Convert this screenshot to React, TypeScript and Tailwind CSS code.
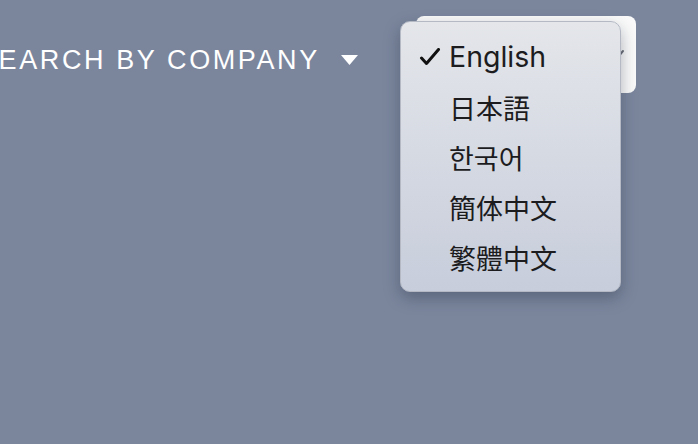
import React from "react";

const items = [
  { label: "English", font: "'Inter', 'Liberation Sans', sans-serif", checked: true, size: "text-[28.5px]" },
  { label: "日本語", font: "'Noto Sans CJK JP', sans-serif", size: "text-[27px]" },
  { label: "한국어", font: "'Noto Sans CJK KR', sans-serif", size: "text-[27px]" },
  { label: "簡体中文", font: "'Noto Sans CJK SC', sans-serif", size: "text-[27px]" },
  { label: "繁體中文", font: "'Noto Sans CJK TC', sans-serif", size: "text-[27px]" },
];

export default function App() {
  return (
    <div className="relative w-[698px] h-[444px] overflow-hidden bg-[#7b869d]">
      <div className="flex items-start ml-[-22px] pt-[16px]">
        <div className="flex items-center h-[77px] pt-[11px]">
          <span className="text-white text-[27px] tracking-[2.6px] font-['Liberation_Sans',sans-serif] leading-none">
            SEARCH BY COMPANY
          </span>
          <svg width="17" height="10" viewBox="0 0 17 10" className="ml-[21px]">
            <path d="M0 0 H17 L8.5 10 Z" fill="#ffffff" />
          </svg>
        </div>
        <div className="ml-[58px] relative w-[220px] h-[77px] rounded-[8px] bg-[#fafafa]">
          <svg width="14" height="14" viewBox="0 0 14 14" className="absolute right-[6px] top-[32px]">
            <path d="M2 9 L7 3" stroke="#6b6f78" strokeWidth="2" fill="none" strokeLinecap="round" />
          </svg>
        </div>
      </div>

      <div className="absolute left-[400px] top-[21px] w-[221px] h-[271px] rounded-[10px] border border-[#b4b9c4] bg-gradient-to-b from-[#e4e6ea] to-[#c7cddb] shadow-[0_6px_16px_rgba(30,40,60,0.35)] py-[10px]">
        {items.map((it) => (
          <div key={it.label} className="relative flex items-center h-[50px] pl-[48px]">
            {it.checked && (
              <svg width="22" height="18" viewBox="0 0 22 18" className="absolute left-[18px] top-[16px]">
                <path d="M2.5 10 L7.5 15.5 L19.5 1.5" stroke="#111111" strokeWidth="3" fill="none" strokeLinecap="round" strokeLinejoin="round" />
              </svg>
            )}
            <span className={`${it.size} text-[#1c1c1e] leading-none`} style={{ fontFamily: it.font }}>
              {it.label}
            </span>
          </div>
        ))}
      </div>
    </div>
  );
}
